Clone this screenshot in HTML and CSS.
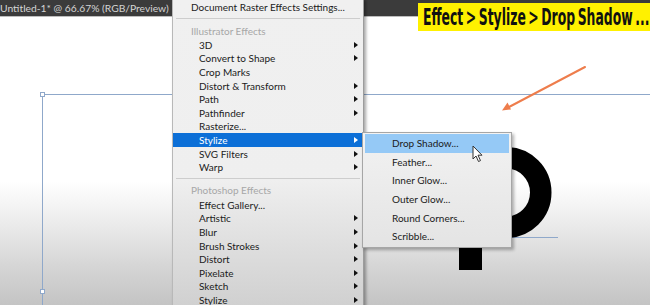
FILE: index.html
```html
<!DOCTYPE html>
<html lang="en">
<head>
	<meta charset="UTF-8">
	<title>Effect menu - Drop Shadow</title>
	<link rel="stylesheet" href="styles.css">
</head>
<body>
<main class="screen">
	<div class="titlebar"><span class="doc-title">Untitled-1* @ 66.67% (RGB/Preview)</span></div>
	<div class="canvas"></div>

	<!-- artboard guides, the letter and the red callout arrow -->
	<svg class="artwork" width="650" height="305" viewBox="0 0 650 305">
		<g stroke="#8fa8ca" stroke-width="1" fill="none">
			<line x1="42.5" y1="94.5" x2="650" y2="94.5"/>
			<line x1="42.5" y1="94.5" x2="42.5" y2="305"/>
			<line x1="380" y1="237.5" x2="558" y2="237.5"/>
		</g>
		<rect x="40.5" y="92.5" width="4" height="4" fill="#fff" stroke="#8fa8ca"/>
		<rect x="40.5" y="289.5" width="4" height="4" fill="#fff" stroke="#8fa8ca"/>
		<rect x="459" y="150" width="23" height="120" fill="#000"/>
		<circle cx="506" cy="192.5" r="34.75" fill="none" stroke="#000" stroke-width="21.5"/>
		<line x1="585" y1="67" x2="509" y2="107" stroke="#ee7d4c" stroke-width="2" stroke-linecap="round"/>
		<path d="M502 110.5 L507.5 102.5 L511 109.5 Z" fill="#ee7d4c"/>
	</svg>

	<ul class="menu">
		<li class="item top">Document Raster Effects Settings...</li>
		<li class="sep"></li>
		<li class="head">Illustrator Effects</li>
		<li class="item more">3D</li>
		<li class="item more">Convert to Shape</li>
		<li class="item">Crop Marks</li>
		<li class="item more">Distort &amp; Transform</li>
		<li class="item more">Path</li>
		<li class="item more">Pathfinder</li>
		<li class="item">Rasterize...</li>
		<li class="item more active">Stylize</li>
		<li class="item more">SVG Filters</li>
		<li class="item more">Warp</li>
		<li class="sep"></li>
		<li class="head">Photoshop Effects</li>
		<li class="item">Effect Gallery...</li>
		<li class="item more">Artistic</li>
		<li class="item more">Blur</li>
		<li class="item more">Brush Strokes</li>
		<li class="item more">Distort</li>
		<li class="item more">Pixelate</li>
		<li class="item more">Sketch</li>
		<li class="item more">Stylize</li>
	</ul>

	<ul class="submenu">
		<li class="sub-item hover">Drop Shadow...</li>
		<li class="sub-item">Feather...</li>
		<li class="sub-item">Inner Glow...</li>
		<li class="sub-item">Outer Glow...</li>
		<li class="sub-item">Round Corners...</li>
		<li class="sub-item">Scribble...</li>
	</ul>

	<svg class="cursor" width="12" height="18" viewBox="0 0 12 18">
		<path d="M1 1 L1 14 L4 11 L6.5 16.5 L8.5 15.6 L6 10.2 L10 10.2 Z" fill="#fff" stroke="#333" stroke-width="1" stroke-linejoin="round"/>
	</svg>

	<div class="caption"><span class="caption-text">Effect &gt; Stylize &gt; Drop Shadow ...</span></div>
</main>
</body>
</html>
```

FILE: styles.css
```css
body{
	margin: 0;
	background: #fff;
}

.screen{
	position: relative;
	display: block;
	width: 650px;
	height: 305px;
	overflow: hidden;
	font-family: Lato, "Noto Sans", sans-serif;
}

.titlebar{
	height: 16px;
	background: #3b3b3b;
	border-bottom: 1px solid #bdbdbd;
	color: #d4d4d4;
	font-size: 10.3px;
	line-height: 16px;
	white-space: nowrap;
}

.canvas{
	height: 288px;
	background: linear-gradient(#fff 0%, #fff 57%, #ebebeb 72%, #d6d6d6 86%, #c4c4c4 100%);
}

.artwork{
	position: absolute;
	top: 0;
	left: 0;
}

/* the Effect menu and its Stylize flyout lie over the canvas */
.menu{
	position: absolute;
	top: 0;
	left: 172px;
	width: 190px;
	height: 310px;
	margin: 0;
	padding: 0;
	list-style: none;
	background: linear-gradient(#f0f0f0 0%, #efefef 58%, #dedede 80%, #cfcfcf 100%);
	border-left: 1px solid #b8b8b8;
	border-right: 1px solid #9c9c9c;
	box-shadow: 2px 0 3px rgba(0,0,0,.35);
	font-size: 10px;
	color: #1b1b1b;
}

.item{
	display: flex;
	align-items: center;
	height: 13.6px;
	padding: 0 5px 0 26px;
	white-space: nowrap;
}

.item.top{
	height: 14px;
	padding-left: 18px;
}

.item.more::after{
	content: "";
	margin-left: auto;
	border-left: 4px solid #111;
	border-top: 3px solid transparent;
	border-bottom: 3px solid transparent;
}

.item.active{
	background: #0c6fd7;
	color: #fff;
}

.item.active::after{
	border-left-color: #fff;
}

.head{
	display: flex;
	align-items: center;
	height: 15px;
	padding-left: 18px;
	color: #a7a7a7;
}

.sep{
	height: 0;
	margin: 4px 3px;
	border-top: 1px solid #cdcdcd;
}

.submenu{
	position: absolute;
	top: 132px;
	left: 362px;
	width: 144px;
	height: 112px;
	margin: 0;
	padding: 1px 2px;
	list-style: none;
	background: linear-gradient(#f2f2f2, #e4e4e4);
	border: 1px solid #a6a6a6;
	box-shadow: 2px 2px 3px rgba(0,0,0,.3);
	font-size: 10px;
	color: #1b1b1b;
}

.sub-item{
	display: flex;
	align-items: center;
	height: 18.6px;
	padding-left: 27px;
	white-space: nowrap;
}

.sub-item.hover{
	background: #95c9f6;
}

.cursor{
	position: absolute;
	top: 145px;
	left: 472px;
}

.caption{
	position: absolute;
	top: 3px;
	left: 418px;
	width: 227px;
	height: 28px;
	padding-left: 5px;
	overflow: hidden;
	background: #fff100;
	color: #111;
	font-family: "DejaVu Sans Condensed", "DejaVu Sans", sans-serif;
	font-size: 23px;
	line-height: 28px;
	white-space: nowrap;
}

.caption-text{
	display: inline-block;
	transform: scaleX(0.6);
	transform-origin: left center;
	font-weight: 600;
	word-spacing: -3px;
}
```
